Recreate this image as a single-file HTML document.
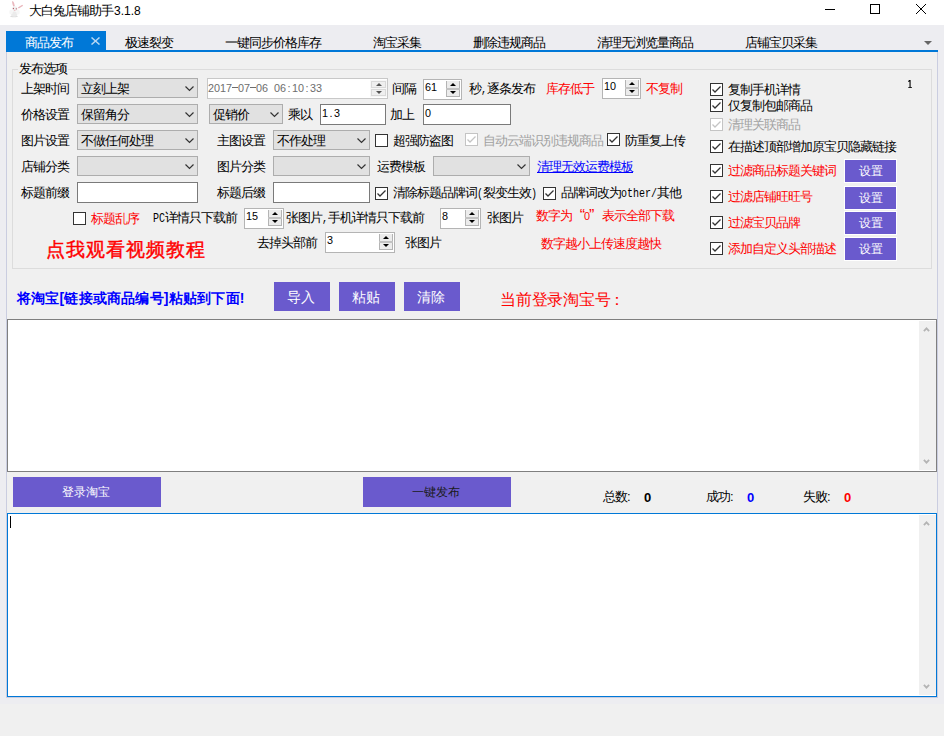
<!DOCTYPE html>
<html><head><meta charset="utf-8">
<style>
*{box-sizing:border-box;margin:0;padding:0}
html,body{width:944px;height:736px;overflow:hidden;background:#f0f0f0;font-family:"Liberation Sans",sans-serif;font-size:12px;color:#000;position:relative}
.a{position:absolute;white-space:nowrap}
.t{position:absolute;white-space:nowrap;line-height:16px;height:16px;font-size:13px;letter-spacing:-1px}
.red{color:#f00}
.cb{position:absolute;width:21px;height:21px;border:1px solid #adadad;background:#e1e1e1}
.cbx{position:absolute;width:13px;height:13px;border:1px solid #333;background:#fff}
.tb{position:absolute;border:1px solid #7a7a7a;background:#fff}
.nud{position:absolute;border:1px solid #b4b4b4;background:#fff}
.btn{position:absolute;background:#6a5acd;color:#fff;text-align:center}
.dig{font-size:10.8px;letter-spacing:0}
.mono{font-family:"Liberation Mono",monospace;font-size:12px;letter-spacing:0;display:inline-block;transform:scaleX(.8333);transform-origin:0 0}
</style></head><body>
<!-- title bar -->
<div class="a" style="left:0;top:0;width:944px;height:25px;background:#fff"></div>
<svg class="a" style="left:8px;top:1px" width="16" height="17" viewBox="0 0 16 17">
 <ellipse cx="6" cy="15.4" rx="3.8" ry=".8" fill="#dedede"/>
 <ellipse cx="6.2" cy="13" rx="3.2" ry="2.7" fill="#ebebeb"/>
 <ellipse cx="3" cy="11" rx="1.8" ry="2.5" fill="#f6f6f6"/>
 <ellipse cx="10" cy="11" rx="1.8" ry="2.5" fill="#f6f6f6"/>
 <path d="M4.2 0C5.6 0 6.6 3 6.8 5.2L5.2 5.6C4.6 3.6 3.8 1.4 4.2 0Z" fill="#eab8be"/>
 <path d="M9.8 6.4L14.2 3.8L15.2 4.8L10.8 7.4Z" fill="#eab8be"/>
 <ellipse cx="6.8" cy="7.8" rx="2.7" ry="2.5" fill="#f1f1f1"/>
 <circle cx="5.4" cy="7.5" r=".65" fill="#b45a64"/><circle cx="8.3" cy="7.8" r=".65" fill="#b45a64"/>
 <circle cx="6.8" cy="9.3" r=".55" fill="#e79aa4"/>
</svg>
<div class="t" style="left:29px;top:3px">大白兔店铺助手<span style="letter-spacing:0;font-size:12px;position:relative;left:1px">3.1.8</span></div>
<div class="a" style="left:825px;top:9px;width:10px;height:1px;background:#000"></div>
<div class="a" style="left:870px;top:4px;width:10px;height:10px;border:1px solid #000"></div>
<svg class="a" style="left:916px;top:4px" width="10" height="10" viewBox="0 0 10 10"><path d="M0 0L10 10M10 0L0 10" stroke="#000" stroke-width="1"/></svg>

<!-- window area tint -->
<div class="a" style="left:0;top:25px;width:944px;height:679px;background:#ededf1"></div>
<!-- tabs -->
<div class="a" style="left:6px;top:31px;width:100px;height:21px;background:#0078d7"></div>
<div class="t" style="left:25px;top:35px;color:#fff">商品发布</div>
<svg class="a" style="left:91px;top:37px" width="9" height="8" viewBox="0 0 9 8"><path d="M0.5 0.5L8.5 7.5M8.5 0.5L0.5 7.5" stroke="#b5d7f3" stroke-width="1.5"/></svg>
<div class="t" style="left:125px;top:35px">极速裂变</div>
<div class="t" style="left:225px;top:35px">一键同步价格库存</div>
<div class="t" style="left:373px;top:35px">淘宝采集</div>
<div class="t" style="left:473px;top:35px">删除违规商品</div>
<div class="t" style="left:597px;top:35px">清理无浏览量商品</div>
<div class="t" style="left:745px;top:35px">店铺宝贝采集</div>
<svg class="a" style="left:924px;top:41px" width="8" height="4" viewBox="0 0 8 4"><path d="M0 0H8L4 4Z" fill="#666"/></svg>
<div class="a" style="left:6px;top:50px;width:932px;height:2px;background:#0078d7"></div>
<!-- page -->
<div class="a" style="left:6px;top:52px;width:932px;height:646px;background:#f0f0f0;border:1px solid #cacde0;border-top:none"></div>

<!-- group box -->
<div class="a" style="left:12px;top:69px;width:920px;height:200px;border:1px solid #dcdcdc"></div>
<div class="t" style="left:18px;top:61px;background:#f0f0f0;padding:0 1px">发布选项</div>
<div class="t" style="left:21px;top:81px;">上架时间</div>
<div class="cb" style="left:77px;top:78px;width:121px;height:20px"></div>
<div class="t" style="left:81px;top:81px;">立刻上架</div>
<svg class="a" style="left:185px;top:86px" width="9" height="6" viewBox="0 0 9 6"><path d="M0.5 0.5L4.5 4.5L8.5 0.5" fill="none" stroke="#333" stroke-width="1.2"/></svg>
<div class="a" style="left:207px;top:78px;width:181px;height:21px;border:1px solid #c8c8c8;background:#fff"></div>
<div class="t dig" style="left:208px;top:80px;color:#6d6d6d">2017<span style="display:inline-block;width:6px;height:8px;position:relative"><span style="position:absolute;left:0;right:0;top:3px;height:1px;background:currentColor"></span></span>07<span style="display:inline-block;width:6px;height:8px;position:relative"><span style="position:absolute;left:0;right:0;top:3px;height:1px;background:currentColor"></span></span>06<span style="display:inline-block;width:6px;text-align:center">&nbsp;</span>06<span style="display:inline-block;width:6px;text-align:center">:</span>10<span style="display:inline-block;width:6px;text-align:center">:</span>33</div>
<div class="a" style="left:370px;top:80px;width:17px;height:17px;background:#f7f7f7"></div>
<div class="a" style="left:371px;top:81px;width:15px;height:7px;background:#efefef;border:1px solid #d9d9d9"></div>
<div class="a" style="left:371px;top:89px;width:15px;height:7px;background:#efefef;border:1px solid #d9d9d9"></div>
<svg class="a" style="left:376px;top:83px" width="6" height="3" viewBox="0 0 6 3"><path d="M0 3H6L3 0Z" fill="#555"/></svg>
<svg class="a" style="left:376px;top:91px" width="6" height="3" viewBox="0 0 6 3"><path d="M0 0H6L3 3Z" fill="#555"/></svg>
<div class="t" style="left:392px;top:81px;">间隔</div>
<div class="nud" style="left:423px;top:79px;width:39px;height:21px"></div>
<div class="t dig" style="left:425px;top:79px;">61</div>
<div class="a" style="left:446px;top:81px;width:14px;height:16px;background:#ececec;border:1px solid #b4b4b4;border-top:none"></div>
<div class="a" style="left:446px;top:88px;width:14px;height:2px;background:#c2c2c2"></div>
<svg class="a" style="left:450px;top:83px" width="6" height="3" viewBox="0 0 6 3"><path d="M0 3H6L3 0Z" fill="#000"/></svg>
<svg class="a" style="left:450px;top:91px" width="6" height="3" viewBox="0 0 6 3"><path d="M0 0H6L3 3Z" fill="#000"/></svg>
<div class="t" style="left:469px;top:81px;">秒<span class="mono" style="margin-right:-1.2px">,</span>逐条发布</div>
<div class="t" style="left:546px;top:81px;color:#f00">库存低于</div>
<div class="nud" style="left:602px;top:78px;width:39px;height:21px"></div>
<div class="t dig" style="left:604px;top:78px;">10</div>
<div class="a" style="left:625px;top:80px;width:14px;height:16px;background:#ececec;border:1px solid #b4b4b4;border-top:none"></div>
<div class="a" style="left:625px;top:87px;width:14px;height:2px;background:#c2c2c2"></div>
<svg class="a" style="left:629px;top:82px" width="6" height="3" viewBox="0 0 6 3"><path d="M0 3H6L3 0Z" fill="#000"/></svg>
<svg class="a" style="left:629px;top:90px" width="6" height="3" viewBox="0 0 6 3"><path d="M0 0H6L3 3Z" fill="#000"/></svg>
<div class="t" style="left:646px;top:81px;color:#f00">不复制</div>
<div class="a" style="left:710px;top:83px;width:13px;height:13px;border:1px solid #333;background:#fff"></div><svg class="a" style="left:710px;top:83px" width="13" height="13" viewBox="0 0 13 13"><path d="M2.5 6.5L5 9L10.5 3.5" fill="none" stroke="#333" stroke-width="1.3"/></svg>
<div class="t" style="left:728px;top:82px;">复制手机详情</div>
<svg class="a" style="left:907px;top:79px" width="6" height="10" viewBox="0 0 6 10"><path d="M2.2 1.1L3.6 0.9V8.2H5V9H1.2V8.2H2.5V2.5L1.2 2.9V2.1Z" fill="#000"/></svg>
<div class="t" style="left:21px;top:107px;">价格设置</div>
<div class="cb" style="left:77px;top:104px;width:121px;height:20px"></div>
<div class="t" style="left:81px;top:107px;">保留角分</div>
<svg class="a" style="left:185px;top:112px" width="9" height="6" viewBox="0 0 9 6"><path d="M0.5 0.5L4.5 4.5L8.5 0.5" fill="none" stroke="#333" stroke-width="1.2"/></svg>
<div class="cb" style="left:209px;top:104px;width:74px;height:20px"></div>
<div class="t" style="left:213px;top:107px;">促销价</div>
<svg class="a" style="left:270px;top:112px" width="9" height="6" viewBox="0 0 9 6"><path d="M0.5 0.5L4.5 4.5L8.5 0.5" fill="none" stroke="#333" stroke-width="1.2"/></svg>
<div class="t" style="left:288px;top:107px;">乘以</div>
<div class="tb" style="left:320px;top:104px;width:66px;height:21px"></div>
<div class="t dig" style="left:322px;top:105px;">1<span style="display:inline-block;width:6px;text-align:center">.</span>3</div>
<div class="t" style="left:390px;top:107px;">加上</div>
<div class="tb" style="left:423px;top:104px;width:88px;height:21px"></div>
<div class="t dig" style="left:425px;top:105px;">0</div>
<div class="a" style="left:710px;top:99px;width:13px;height:13px;border:1px solid #333;background:#fff"></div><svg class="a" style="left:710px;top:99px" width="13" height="13" viewBox="0 0 13 13"><path d="M2.5 6.5L5 9L10.5 3.5" fill="none" stroke="#333" stroke-width="1.3"/></svg>
<div class="t" style="left:728px;top:98px;">仅复制包邮商品</div>
<div class="t" style="left:21px;top:133px;">图片设置</div>
<div class="cb" style="left:77px;top:130px;width:121px;height:20px"></div>
<div class="t" style="left:81px;top:133px;">不做任何处理</div>
<svg class="a" style="left:185px;top:138px" width="9" height="6" viewBox="0 0 9 6"><path d="M0.5 0.5L4.5 4.5L8.5 0.5" fill="none" stroke="#333" stroke-width="1.2"/></svg>
<div class="t" style="left:217px;top:133px;">主图设置</div>
<div class="cb" style="left:273px;top:130px;width:97px;height:20px"></div>
<div class="t" style="left:277px;top:133px;">不作处理</div>
<svg class="a" style="left:357px;top:138px" width="9" height="6" viewBox="0 0 9 6"><path d="M0.5 0.5L4.5 4.5L8.5 0.5" fill="none" stroke="#333" stroke-width="1.2"/></svg>
<div class="a" style="left:375px;top:134px;width:13px;height:13px;border:1px solid #333;background:#fff"></div>
<div class="t" style="left:393px;top:133px;">超强防盗图</div>
<div class="a" style="left:465px;top:133px;width:13px;height:13px;border:1px solid #c4c4c4;background:#fff"></div><svg class="a" style="left:465px;top:133px" width="13" height="13" viewBox="0 0 13 13"><path d="M2.5 6.5L5 9L10.5 3.5" fill="none" stroke="#c4c4c4" stroke-width="1.3"/></svg>
<div class="t" style="left:483px;top:133px;color:#a0a0a0">自动云端识别违规商品</div>
<div class="a" style="left:607px;top:133px;width:13px;height:13px;border:1px solid #333;background:#fff"></div><svg class="a" style="left:607px;top:133px" width="13" height="13" viewBox="0 0 13 13"><path d="M2.5 6.5L5 9L10.5 3.5" fill="none" stroke="#333" stroke-width="1.3"/></svg>
<div class="t" style="left:625px;top:133px;">防重复上传</div>
<div class="a" style="left:710px;top:118px;width:13px;height:13px;border:1px solid #c4c4c4;background:#fff"></div><svg class="a" style="left:710px;top:118px" width="13" height="13" viewBox="0 0 13 13"><path d="M2.5 6.5L5 9L10.5 3.5" fill="none" stroke="#c4c4c4" stroke-width="1.3"/></svg>
<div class="t" style="left:728px;top:117px;color:#a0a0a0">清理关联商品</div>
<div class="t" style="left:21px;top:159px;">店铺分类</div>
<div class="cb" style="left:77px;top:156px;width:121px;height:20px"></div>
<svg class="a" style="left:185px;top:164px" width="9" height="6" viewBox="0 0 9 6"><path d="M0.5 0.5L4.5 4.5L8.5 0.5" fill="none" stroke="#333" stroke-width="1.2"/></svg>
<div class="t" style="left:217px;top:159px;">图片分类</div>
<div class="cb" style="left:273px;top:156px;width:97px;height:20px"></div>
<svg class="a" style="left:357px;top:164px" width="9" height="6" viewBox="0 0 9 6"><path d="M0.5 0.5L4.5 4.5L8.5 0.5" fill="none" stroke="#333" stroke-width="1.2"/></svg>
<div class="t" style="left:377px;top:159px;">运费模板</div>
<div class="cb" style="left:433px;top:156px;width:97px;height:20px"></div>
<svg class="a" style="left:517px;top:164px" width="9" height="6" viewBox="0 0 9 6"><path d="M0.5 0.5L4.5 4.5L8.5 0.5" fill="none" stroke="#333" stroke-width="1.2"/></svg>
<div class="t" style="left:537px;top:159px;color:#00f"><u>清理无效运费模板</u></div>
<div class="a" style="left:710px;top:140px;width:13px;height:13px;border:1px solid #333;background:#fff"></div><svg class="a" style="left:710px;top:140px" width="13" height="13" viewBox="0 0 13 13"><path d="M2.5 6.5L5 9L10.5 3.5" fill="none" stroke="#333" stroke-width="1.3"/></svg>
<div class="t" style="left:728px;top:139px;">在描述顶部增加原宝贝隐藏链接</div>
<div class="t" style="left:21px;top:185px;">标题前缀</div>
<div class="tb" style="left:77px;top:182px;width:121px;height:21px"></div>
<div class="t" style="left:217px;top:185px;">标题后缀</div>
<div class="tb" style="left:273px;top:182px;width:97px;height:21px"></div>
<div class="a" style="left:375px;top:187px;width:13px;height:13px;border:1px solid #333;background:#fff"></div><svg class="a" style="left:375px;top:187px" width="13" height="13" viewBox="0 0 13 13"><path d="M2.5 6.5L5 9L10.5 3.5" fill="none" stroke="#333" stroke-width="1.3"/></svg>
<div class="t" style="left:393px;top:185px;">清除标题品牌词<span class="mono" style="margin-right:-1.2px">(</span>裂变生效<span class="mono" style="margin-right:-1.2px">)</span></div>
<div class="a" style="left:543px;top:187px;width:13px;height:13px;border:1px solid #333;background:#fff"></div><svg class="a" style="left:543px;top:187px" width="13" height="13" viewBox="0 0 13 13"><path d="M2.5 6.5L5 9L10.5 3.5" fill="none" stroke="#333" stroke-width="1.3"/></svg>
<div class="t" style="left:561px;top:185px;">品牌词改为<span class="mono" style="margin-right:-7.2px">other/</span>其他</div>
<div class="a" style="left:710px;top:164px;width:13px;height:13px;border:1px solid #333;background:#fff"></div><svg class="a" style="left:710px;top:164px" width="13" height="13" viewBox="0 0 13 13"><path d="M2.5 6.5L5 9L10.5 3.5" fill="none" stroke="#333" stroke-width="1.3"/></svg>
<div class="t" style="left:728px;top:163px;color:#f00">过滤商品标题关键词</div>
<div class="btn" style="left:844px;top:159px;width:53px;height:24px;line-height:22px;color:#fff;font-size:12px;border:1px solid #fff;"><span style="position:relative;left:0px">设置</span></div>
<div class="a" style="left:710px;top:190px;width:13px;height:13px;border:1px solid #333;background:#fff"></div><svg class="a" style="left:710px;top:190px" width="13" height="13" viewBox="0 0 13 13"><path d="M2.5 6.5L5 9L10.5 3.5" fill="none" stroke="#333" stroke-width="1.3"/></svg>
<div class="t" style="left:728px;top:189px;color:#f00">过滤店铺旺旺号</div>
<div class="btn" style="left:844px;top:186px;width:53px;height:24px;line-height:22px;color:#fff;font-size:12px;border:1px solid #fff;"><span style="position:relative;left:0px">设置</span></div>
<div class="a" style="left:73px;top:212px;width:13px;height:13px;border:1px solid #333;background:#fff"></div>
<div class="t" style="left:91px;top:211px;color:#f00">标题乱序</div>
<div class="t" style="left:153px;top:210px;"><span class="mono" style="margin-right:-2.4px">PC</span>详情只下载前</div>
<div class="nud" style="left:244px;top:208px;width:40px;height:21px"></div>
<div class="t dig" style="left:246px;top:208px;">15</div>
<div class="a" style="left:268px;top:210px;width:14px;height:16px;background:#ececec;border:1px solid #b4b4b4;border-top:none"></div>
<div class="a" style="left:268px;top:217px;width:14px;height:2px;background:#c2c2c2"></div>
<svg class="a" style="left:272px;top:212px" width="6" height="3" viewBox="0 0 6 3"><path d="M0 3H6L3 0Z" fill="#000"/></svg>
<svg class="a" style="left:272px;top:220px" width="6" height="3" viewBox="0 0 6 3"><path d="M0 0H6L3 3Z" fill="#000"/></svg>
<div class="t" style="left:286px;top:210px;">张图片<span class="mono" style="margin-right:-1.2px">,</span>手机详情只下载前</div>
<div class="nud" style="left:440px;top:208px;width:41px;height:21px"></div>
<div class="t dig" style="left:442px;top:208px;">8</div>
<div class="a" style="left:465px;top:210px;width:14px;height:16px;background:#ececec;border:1px solid #b4b4b4;border-top:none"></div>
<div class="a" style="left:465px;top:217px;width:14px;height:2px;background:#c2c2c2"></div>
<svg class="a" style="left:469px;top:212px" width="6" height="3" viewBox="0 0 6 3"><path d="M0 3H6L3 0Z" fill="#000"/></svg>
<svg class="a" style="left:469px;top:220px" width="6" height="3" viewBox="0 0 6 3"><path d="M0 0H6L3 3Z" fill="#000"/></svg>
<div class="t" style="left:487px;top:210px;">张图片</div>
<div class="t" style="left:536px;top:208px;color:#f00">数字为<span style="display:inline-block;width:12px;text-align:right;font-size:16px;letter-spacing:0;line-height:10px;vertical-align:top;position:relative;top:3px;left:1px">“</span><span style="font-size:10.8px;letter-spacing:0">0</span><span style="display:inline-block;width:12px;font-size:16px;letter-spacing:0;line-height:10px;vertical-align:top;position:relative;top:3px;left:-1px">”</span>表示全部下载</div>
<div class="a" style="left:710px;top:216px;width:13px;height:13px;border:1px solid #333;background:#fff"></div><svg class="a" style="left:710px;top:216px" width="13" height="13" viewBox="0 0 13 13"><path d="M2.5 6.5L5 9L10.5 3.5" fill="none" stroke="#333" stroke-width="1.3"/></svg>
<div class="t" style="left:728px;top:215px;color:#f00">过滤宝贝品牌</div>
<div class="btn" style="left:844px;top:211px;width:53px;height:24px;line-height:22px;color:#fff;font-size:12px;border:1px solid #fff;"><span style="position:relative;left:0px">设置</span></div>
<div class="t" style="left:46px;top:239px;font-size:19px;letter-spacing:1px;line-height:22px;height:22px;-webkit-text-stroke:0.4px #f00;color:#f00">点我观看视频教程</div>
<div class="t" style="left:257px;top:235px;">去掉头部前</div>
<div class="nud" style="left:325px;top:232px;width:70px;height:21px"></div>
<div class="t dig" style="left:327px;top:232px;">3</div>
<div class="a" style="left:379px;top:234px;width:14px;height:16px;background:#ececec;border:1px solid #b4b4b4;border-top:none"></div>
<div class="a" style="left:379px;top:241px;width:14px;height:2px;background:#c2c2c2"></div>
<svg class="a" style="left:383px;top:236px" width="6" height="3" viewBox="0 0 6 3"><path d="M0 3H6L3 0Z" fill="#000"/></svg>
<svg class="a" style="left:383px;top:244px" width="6" height="3" viewBox="0 0 6 3"><path d="M0 0H6L3 3Z" fill="#000"/></svg>
<div class="t" style="left:405px;top:235px;">张图片</div>
<div class="t" style="left:541px;top:236px;color:#f00">数字越小上传速度越快</div>
<div class="a" style="left:710px;top:242px;width:13px;height:13px;border:1px solid #333;background:#fff"></div><svg class="a" style="left:710px;top:242px" width="13" height="13" viewBox="0 0 13 13"><path d="M2.5 6.5L5 9L10.5 3.5" fill="none" stroke="#333" stroke-width="1.3"/></svg>
<div class="t" style="left:728px;top:241px;color:#f00">添加自定义头部描述</div>
<div class="btn" style="left:844px;top:237px;width:53px;height:24px;line-height:22px;color:#fff;font-size:12px;border:1px solid #fff;"><span style="position:relative;left:0px">设置</span></div>
<div class="t" style="left:17px;top:289px;font-size:14px;letter-spacing:0.2px;line-height:18px;height:18px;font-weight:bold;color:#00f">将淘宝[链接或商品编号]粘贴到下面!</div>
<div class="btn" style="left:274px;top:282px;width:56px;height:29px;line-height:31px;color:#fff;font-size:14px;"><span style="position:relative;left:-1px">导入</span></div>
<div class="btn" style="left:339px;top:282px;width:56px;height:29px;line-height:31px;color:#fff;font-size:14px;"><span style="position:relative;left:-1px">粘贴</span></div>
<div class="btn" style="left:404px;top:282px;width:56px;height:29px;line-height:31px;color:#fff;font-size:14px;"><span style="position:relative;left:-1px">清除</span></div>
<div class="t" style="left:500px;top:290px;font-size:16px;letter-spacing:-0.2px;line-height:20px;height:20px;color:#f00">当前登录淘宝号<span style="position:relative;left:-2px">：</span></div>
<div class="a" style="left:7px;top:319px;width:930px;height:153px;border:1px solid #7f7f7f;background:#fff"></div>
<div class="a" style="left:919px;top:321px;width:17px;height:149px;background:#f0f0f0"></div>
<svg class="a" style="left:923px;top:326px" width="7" height="6" viewBox="0 0 7 6"><path d="M0.9 5.2L3.5 2.4L6.1 5.2" fill="none" stroke="#b4b4b4" stroke-width="1.8"/></svg>
<svg class="a" style="left:923px;top:459px" width="7" height="6" viewBox="0 0 7 6"><path d="M0.9 0.8L3.5 3.6L6.1 0.8" fill="none" stroke="#b4b4b4" stroke-width="1.8"/></svg>
<div class="btn" style="left:13px;top:477px;width:148px;height:30px;line-height:30px;color:#fff;font-size:12px;"><span style="position:relative;left:-1px">登录淘宝</span></div>
<div class="btn" style="left:363px;top:477px;width:148px;height:30px;line-height:30px;color:#1a1a1a;font-size:12px;"><span style="position:relative;left:-1px">一键发布</span></div>
<div class="t" style="left:603px;top:489px;">总数:</div>
<div class="t" style="left:644px;top:490px;"><b>0</b></div>
<div class="t" style="left:706px;top:489px;">成功:</div>
<div class="t" style="left:747px;top:490px;"><b style="color:#00f">0</b></div>
<div class="t" style="left:803px;top:489px;">失败:</div>
<div class="t" style="left:844px;top:490px;"><b style="color:#f00">0</b></div>
<div class="a" style="left:7px;top:513px;width:930px;height:184px;border:1px solid #0078d7;background:#fff"></div>
<div class="a" style="left:10px;top:516px;width:1px;height:12px;background:#000"></div>
<div class="a" style="left:919px;top:515px;width:17px;height:180px;background:#f0f0f0"></div>
<svg class="a" style="left:923px;top:520px" width="7" height="6" viewBox="0 0 7 6"><path d="M0.9 5.2L3.5 2.4L6.1 5.2" fill="none" stroke="#b4b4b4" stroke-width="1.8"/></svg>
<svg class="a" style="left:923px;top:684px" width="7" height="6" viewBox="0 0 7 6"><path d="M0.9 0.8L3.5 3.6L6.1 0.8" fill="none" stroke="#b4b4b4" stroke-width="1.8"/></svg>
</body></html>
